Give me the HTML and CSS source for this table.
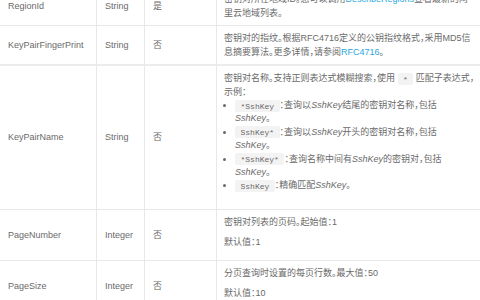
FILE: index.html
```html
<!DOCTYPE html>
<html lang="zh-CN">
<head>
<meta charset="utf-8">
<title>DescribeKeyPairs 请求参数</title>
<link rel="stylesheet" href="styles.css">
</head>
<body>
<table class="params">
  <tbody>
    <tr>
      <td class="name">RegionId</td>
      <td class="type">String</td>
      <td class="req">是</td>
      <td class="desc">密钥对所在地域ID。您可以调用<a href="#">DescribeRegions</a>查看最新的阿<br>里云地域列表。</td>
    </tr>
    <tr>
      <td class="name">KeyPairFingerPrint</td>
      <td class="type">String</td>
      <td class="req">否</td>
      <td class="desc">密钥对的指纹。根据RFC4716定义的公钥指纹格式，采用MD5信<br>息摘要算法。更多详情，请参阅<a href="#">RFC4716</a>。</td>
    </tr>
    <tr class="tall">
      <td class="name">KeyPairName</td>
      <td class="type">String</td>
      <td class="req">否</td>
      <td class="desc">
        <div class="lead">密钥对名称。支持正则表达式模糊搜索，使用 <code>*</code> 匹配子表达式，</div>
        <div class="lead">示例：</div>
        <ul class="examples">
          <li><code>*SshKey</code>：查询以<em>SshKey</em>结尾的密钥对名称，包括<br><em>SshKey</em>。</li>
          <li><code>SshKey*</code>：查询以<em>SshKey</em>开头的密钥对名称，包括<br><em>SshKey</em>。</li>
          <li><code>*SshKey*</code>：查询名称中间有<em>SshKey</em>的密钥对，包括<br><em>SshKey</em>。</li>
          <li><code>SshKey</code>：精确匹配<em>SshKey</em>。</li>
        </ul>
      </td>
    </tr>
    <tr>
      <td class="name">PageNumber</td>
      <td class="type">Integer</td>
      <td class="req">否</td>
      <td class="desc">
        <p>密钥对列表的页码。起始值：1</p>
        <p>默认值：1</p>
      </td>
    </tr>
    <tr>
      <td class="name">PageSize</td>
      <td class="type">Integer</td>
      <td class="req">否</td>
      <td class="desc">
        <p>分页查询时设置的每页行数。最大值：50</p>
        <p>默认值：10</p>
      </td>
    </tr>
  </tbody>
</table>
</body>
</html>
```

FILE: styles.css
```css
html, body {
  margin: 0;
  padding: 0;
  background: #ffffff;
}

body {
  width: 480px;
  height: 300px;
  overflow: hidden;
  font-family: "Liberation Sans", "Noto Sans CJK SC", sans-serif;
  font-size: 9px;
  line-height: 14px;
  color: #6a6a6a;
}

.params {
  border-collapse: separate;
  border-spacing: 0;
  table-layout: fixed;
  width: 560px;
  margin-top: -13px;
}

.params td {
  box-sizing: border-box;
  border-right: 1px solid #e8e8e8;
  border-bottom: 1px solid #e8e8e8;
  padding: 5px 8px;
  vertical-align: middle;
  white-space: nowrap;
}

.params .name { width: 97px; }
.params .type { width: 48px; }
.params .req { width: 72px; }
.params .desc {
  vertical-align: top;
  padding-left: 7px;
  font-feature-settings: "halt";
}

.params tr:nth-child(2) td {
  border-bottom: 2px solid #ececec;
}

.desc a {
  color: #29a6de;
  text-decoration: none;
}

.desc p {
  margin: 0 0 6px;
}

.lead {
  line-height: 14px;
}

code {
  font-family: "Liberation Mono", monospace;
  font-size: 8px;
  line-height: 10px;
  color: #6a6a6a;
  background: #f3f3f3;
  padding: 1.5px 5.5px;
  border-radius: 2px;
}

em {
  font-style: italic;
}

.examples {
  margin: 0 0 11px;
  padding-left: 11px;
  list-style: disc;
}

.examples li {
  line-height: 13.4px;
}
```
